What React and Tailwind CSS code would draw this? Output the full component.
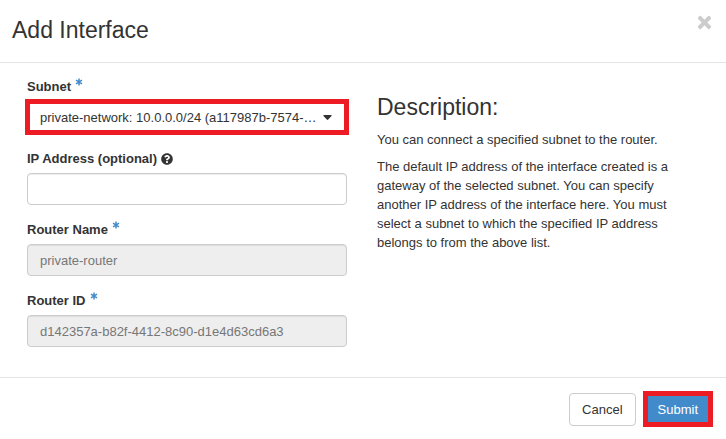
import React from "react";
import { FaQuestionCircle } from "react-icons/fa";

const SUBNETS = ["private-network: 10.0.0.0/24 (a117987b-7574-…"];

function RequiredMark() {
  return (
    <svg viewBox="0 0 8 8" className="mb-2.5 ml-1 size-2 text-[#428bca]" stroke="currentColor" strokeWidth="1.5" aria-hidden="true">
      <path d="M4 0.5 V7.5 M1 2.2 L7 5.8 M7 2.2 L1 5.8" />
    </svg>
  );
}

function FieldLabel({ htmlFor, required, help, children }) {
  return (
    <label htmlFor={htmlFor} className="mb-[5px] flex h-[19px] items-center font-bold">
      {children}
      {required && <RequiredMark />}
      {help && <FaQuestionCircle className="ml-1 size-3" />}
    </label>
  );
}

function TextField({ id, label, value, required, help, disabled }) {
  return (
    <div className="mb-[15px]">
      <FieldLabel htmlFor={id} required={required} help={help}>{label}</FieldLabel>
      <input
        id={id}
        type="text"
        defaultValue={value}
        disabled={disabled}
        className="block h-8 w-full rounded border border-[#ccc] bg-white px-3 shadow-[inset_0_1px_1px_rgba(0,0,0,0.075)] disabled:bg-[#eee] disabled:text-[#777]"
      />
    </div>
  );
}

export default function App() {
  return (
    <form
      onSubmit={(e) => e.preventDefault()}
      className="w-full bg-white font-['Liberation_Sans',Arial,sans-serif] text-[13px] leading-[19px] text-[#333]"
    >
      <header className="flex items-start justify-between border-b border-[#e5e5e5] px-3 pt-3.5 pb-4">
        <h1 className="text-[23px] leading-8">Add Interface</h1>
        <button type="button" aria-label="Close" className="mt-px mr-0.5 text-[#ccc]">
          <svg viewBox="0 0 15 15" className="size-[15px]" fill="currentColor">
            <path d="M3.9 1.1 L7.5 4.7 L11.1 1.1 Q11.8 0.6 12.5 1.1 L13.9 2.5 Q14.4 3.2 13.9 3.9 L10.3 7.5 L13.9 11.1 Q14.4 11.8 13.9 12.5 L12.5 13.9 Q11.8 14.4 11.1 13.9 L7.5 10.3 L3.9 13.9 Q3.2 14.4 2.5 13.9 L1.1 12.5 Q0.6 11.8 1.1 11.1 L4.7 7.5 L1.1 3.9 Q0.6 3.2 1.1 2.5 L2.5 1.1 Q3.2 0.6 3.9 1.1 Z" />
          </svg>
        </button>
      </header>

      <main className="grid grid-cols-2 gap-[30px] pt-3.5 pr-[29px] pb-[15px] pl-[27px]">
        <div>
          <div className="mb-4">
            <FieldLabel htmlFor="subnet" required>Subnet</FieldLabel>
            <div className="relative -mx-0.5 -my-0.5">
              <select
                id="subnet"
                className="block h-9 w-full appearance-none border-5 border-[#ed1c24] bg-white pr-6 pl-2.5"
              >
                {SUBNETS.map((s) => <option key={s}>{s}</option>)}
              </select>
              <svg viewBox="0 0 9 5" className="pointer-events-none absolute top-4 right-[17px] h-[5px] w-[9px]" fill="currentColor">
                <path d="M1 0 H8 Q9 0.3 8.5 1 L5.2 4.6 Q4.5 5.2 3.8 4.6 L0.5 1 Q0 0.3 1 0 Z" />
              </svg>
            </div>
          </div>
          <TextField id="ip" label="IP Address (optional)" help />
          <TextField id="router-name" label="Router Name" value="private-router" required disabled />
          <TextField id="router-id" label="Router ID" value="d142357a-b82f-4412-8c90-d1e4d63cd6a3" required disabled />
        </div>

        <div className="pt-[17px] pr-5">
          <h2 className="mb-2.5 text-[23px] leading-[26px]">Description:</h2>
          <p className="mb-2">You can connect a specified subnet to the router.</p>
          <p>
            The default IP address of the interface created is a gateway of the selected subnet. You can
            specify another IP address of the interface here. You must select a subnet to which the
            specified IP address belongs to from the above list.
          </p>
        </div>
      </main>

      <footer className="flex items-center justify-end gap-[7px] border-t border-[#e5e5e5] px-[13px] pt-[13px] pb-3">
        <button type="button" className="h-[33px] rounded border border-[#ccc] bg-white px-3">Cancel</button>
        <button type="submit" className="h-9 border-5 border-[#ed1c24] bg-[#428bca] px-2.5 text-white">Submit</button>
      </footer>
    </form>
  );
}
